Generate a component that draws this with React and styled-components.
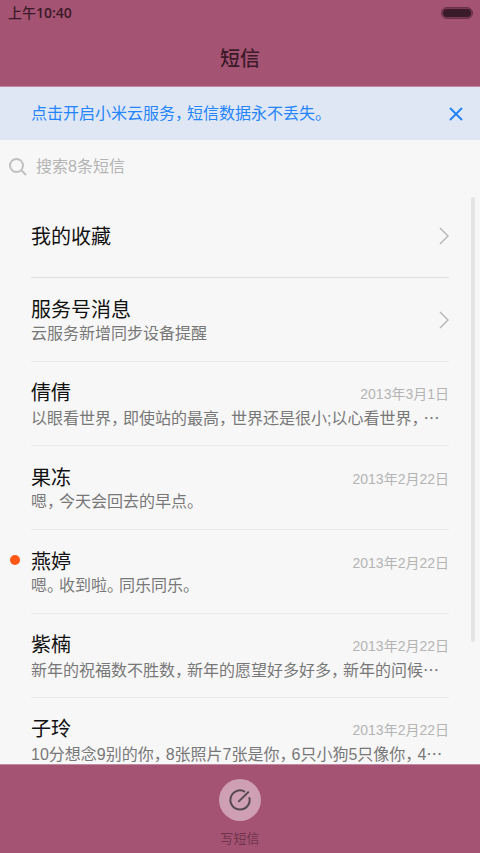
import React from "react";
import styled, { createGlobalStyle } from "styled-components";

const threads = [
  { title: "我的收藏", link: true },
  { title: "服务号消息", preview: "云服务新增同步设备提醒", link: true },
  {
    title: "倩倩",
    date: "2013年3月1日",
    preview: "以眼看世界，即使站的最高，世界还是很小;以心看世界，…",
  },
  { title: "果冻", date: "2013年2月22日", preview: "嗯，今天会回去的早点。" },
  {
    title: "燕婷",
    date: "2013年2月22日",
    preview: "嗯。收到啦。同乐同乐。",
    unread: true,
  },
  {
    title: "紫楠",
    date: "2013年2月22日",
    preview: "新年的祝福数不胜数，新年的愿望好多好多，新年的问候…",
  },
  {
    title: "子玲",
    date: "2013年2月22日",
    preview: "10分想念9别的你，8张照片7张是你，6只小狗5只像你，4…",
  },
];

// half-width punctuation with a little air after it
const Prose = ({ text }) =>
  text.split(/([，。…])/).map((part, i) => {
    if (part === "…") return <Dots key={i}>{part}</Dots>;
    if (part === "，" || part === "。") return <Punct key={i}>{part}</Punct>;
    return part;
  });

const Thread = ({ title, preview, date, unread, link }) => (
  <Item>
    <Gutter>{unread && <UnreadDot role="img" aria-label="未读" />}</Gutter>
    <ItemBody $strong={!preview}>
      <ItemText>
        <TitleRow>
          <Name>{title}</Name>
          {date && <DateText>{date}</DateText>}
        </TitleRow>
        {preview && (
          <Preview>
            <Prose text={preview} />
          </Preview>
        )}
      </ItemText>
      {link && (
        <Chevron viewBox="0 0 10 18" aria-hidden="true">
          <path d="M1 1 L9 9 L1 17" />
        </Chevron>
      )}
    </ItemBody>
  </Item>
);

const App = () => {
  return (
    <>
      <GlobalStyle />
      <Page>
        <Header>
          <StatusBar>
            <span>
              上午<Clock>10:40</Clock>
            </span>
            <Battery viewBox="0 0 32 12" aria-hidden="true">
              <rect x="0.5" y="0.5" width="31" height="11" rx="5.5" />
              <rect className="level" x="2" y="2" width="28" height="8" rx="4" />
            </Battery>
          </StatusBar>
          <Heading>短信</Heading>
        </Header>

        <Banner>
          <BannerLink href="#cloud">
            <Prose text="点击开启小米云服务，短信数据永不丢失。" />
          </BannerLink>
          <CloseButton type="button" aria-label="关闭">
            <svg viewBox="0 0 14 14" width="14" height="14">
              <path d="M1 1 L13 13 M13 1 L1 13" />
            </svg>
          </CloseButton>
        </Banner>

        <SearchBar>
          <svg viewBox="0 0 18 18" width="18" height="18" aria-hidden="true">
            <circle cx="7.5" cy="7.5" r="6.5" />
            <path d="M12 12 L17 17" />
          </svg>
          <SearchInput
            type="search"
            aria-label="搜索短信"
            placeholder="搜索8条短信"
          />
        </SearchBar>

        <ListArea>
          <List>
            {threads.map((thread) => (
              <Thread key={thread.title} {...thread} />
            ))}
          </List>
          <ScrollThumb />
        </ListArea>

        <Footer>
          <ComposeButton type="button">
            <ComposeIcon viewBox="0 0 42 42" aria-hidden="true">
              <circle className="disc" cx="21" cy="21" r="21" />
              <path d="M26 12.8 A9.6 9.6 0 1 0 30.2 18.2" />
              <path d="M19.3 22.9 L29.8 12.6" />
            </ComposeIcon>
            <span>写短信</span>
          </ComposeButton>
        </Footer>
      </Page>
    </>
  );
};

const GlobalStyle = createGlobalStyle`
  * {
    box-sizing: border-box;
  }
  body {
    margin: 0;
    background: #f7f7f7;
    font-family: "Liberation Sans", "Noto Sans CJK SC", sans-serif;
  }
  button,
  input {
    font: inherit;
    border: 0;
    padding: 0;
    background: none;
  }
  button {
    cursor: pointer;
  }
`;

const Page = styled.div`
  display: flex;
  flex-direction: column;
  height: 100vh;
  overflow: hidden;
  background: #f7f7f7;
`;

const Header = styled.header`
  flex: none;
  background: #a55373;
  border-bottom: 1px solid #c488a4;
  color: #3b1a29;
`;

const StatusBar = styled.div`
  display: flex;
  align-items: center;
  justify-content: space-between;
  height: 26px;
  padding: 0 7px 0 8px;
  font-family: "Open Sans", "Noto Sans CJK SC", sans-serif;
  font-size: 14px;
  font-weight: 500;
  line-height: 26px;
`;

const Clock = styled.time`
  font-weight: 600;
`;

const Battery = styled.svg`
  width: 32px;
  height: 12px;
  fill: #7b3b55;
  stroke: #6a3048;
  .level {
    fill: #3b1a29;
    stroke: none;
  }
`;

const Heading = styled.h1`
  margin: 0;
  padding-top: 4px;
  height: 60px;
  font-family: "Noto Sans CJK SC", sans-serif;
  font-size: 20px;
  font-weight: 500;
  line-height: 56px;
  text-align: center;
`;

const Banner = styled.div`
  flex: none;
  display: flex;
  align-items: center;
  justify-content: space-between;
  height: 53px;
  padding: 0 12px 0 31px;
  background: #e0e7f4;
`;

const BannerLink = styled.a`
  color: #2385fb;
  font-size: 16px;
  line-height: 24px;
  text-decoration: none;
`;

const CloseButton = styled.button`
  display: grid;
  place-items: center;
  width: 24px;
  height: 24px;
  svg {
    fill: none;
    stroke: #2385fb;
    stroke-width: 2;
  }
`;

const SearchBar = styled.label`
  flex: none;
  display: flex;
  align-items: center;
  gap: 9px;
  height: 54px;
  padding: 0 9px;
  svg {
    flex: none;
    fill: none;
    stroke: #c0c0c0;
    stroke-width: 2;
  }
`;

const SearchInput = styled.input`
  flex: 1;
  min-width: 0;
  font-size: 16px;
  line-height: 24px;
  color: #333;
  outline: none;
  &::placeholder {
    color: #b4b4b4;
    opacity: 1;
  }
`;

const ListArea = styled.main`
  position: relative;
  flex: 1;
  min-height: 0;
`;

const List = styled.ul`
  height: 100%;
  margin: 0;
  padding: 0;
  list-style: none;
  overflow-y: auto;
  scrollbar-width: none;
`;

const ScrollThumb = styled.div`
  position: absolute;
  top: 3px;
  right: 5px;
  width: 4px;
  height: 78%;
  border-radius: 2px;
  background: #e4e4e4;
`;

const Item = styled.li`
  display: flex;
  height: 84px;
  padding-right: 31px;
`;

const Gutter = styled.div`
  flex: none;
  width: 31px;
  padding: 25px 0 0 10px;
`;

const UnreadDot = styled.span`
  display: block;
  width: 10px;
  height: 10px;
  border-radius: 50%;
  background: #ff5716;
`;

const ItemBody = styled.div`
  flex: 1;
  min-width: 0;
  display: flex;
  align-items: center;
  border-bottom: 1px solid ${(props) => (props.$strong ? "#dedede" : "#ebebeb")};
`;

const ItemText = styled.div`
  flex: 1;
  min-width: 0;
`;

const TitleRow = styled.div`
  display: flex;
  align-items: center;
  justify-content: space-between;
  height: 28px;
`;

const Name = styled.span`
  font-size: 20px;
  line-height: 30px;
  padding-top: 2px;
  color: #111;
`;

const DateText = styled.time`
  padding-top: 4px;
  font-size: 14px;
  line-height: 24px;
  color: #b4b4b4;
`;

const Preview = styled.div`
  font-size: 16px;
  line-height: 22px;
  color: #777;
  white-space: nowrap;
  overflow: hidden;
`;

const Punct = styled.span`
  padding-right: 4px;
  font-feature-settings: "halt";
`;

const Dots = styled.span`
  font-family: "Noto Sans CJK SC", sans-serif;
`;

const Chevron = styled.svg`
  flex: none;
  width: 10px;
  height: 18px;
  fill: none;
  stroke: #b4b4b4;
  stroke-width: 1.4;
`;

const Footer = styled.footer`
  flex: none;
  display: flex;
  justify-content: center;
  padding: 14px 0 4px;
  background: #a55373;
  border-top: 1px solid #c488a4;
`;

const ComposeButton = styled.button`
  display: flex;
  flex-direction: column;
  align-items: center;
  gap: 8px;
  color: #6f344c;
  font-size: 13px;
  line-height: 20px;
`;

const ComposeIcon = styled.svg`
  width: 42px;
  height: 42px;
  fill: none;
  stroke: #55484f;
  stroke-width: 2;
  .disc {
    fill: #cfa0b4;
    stroke: none;
  }
`;

export default App;
